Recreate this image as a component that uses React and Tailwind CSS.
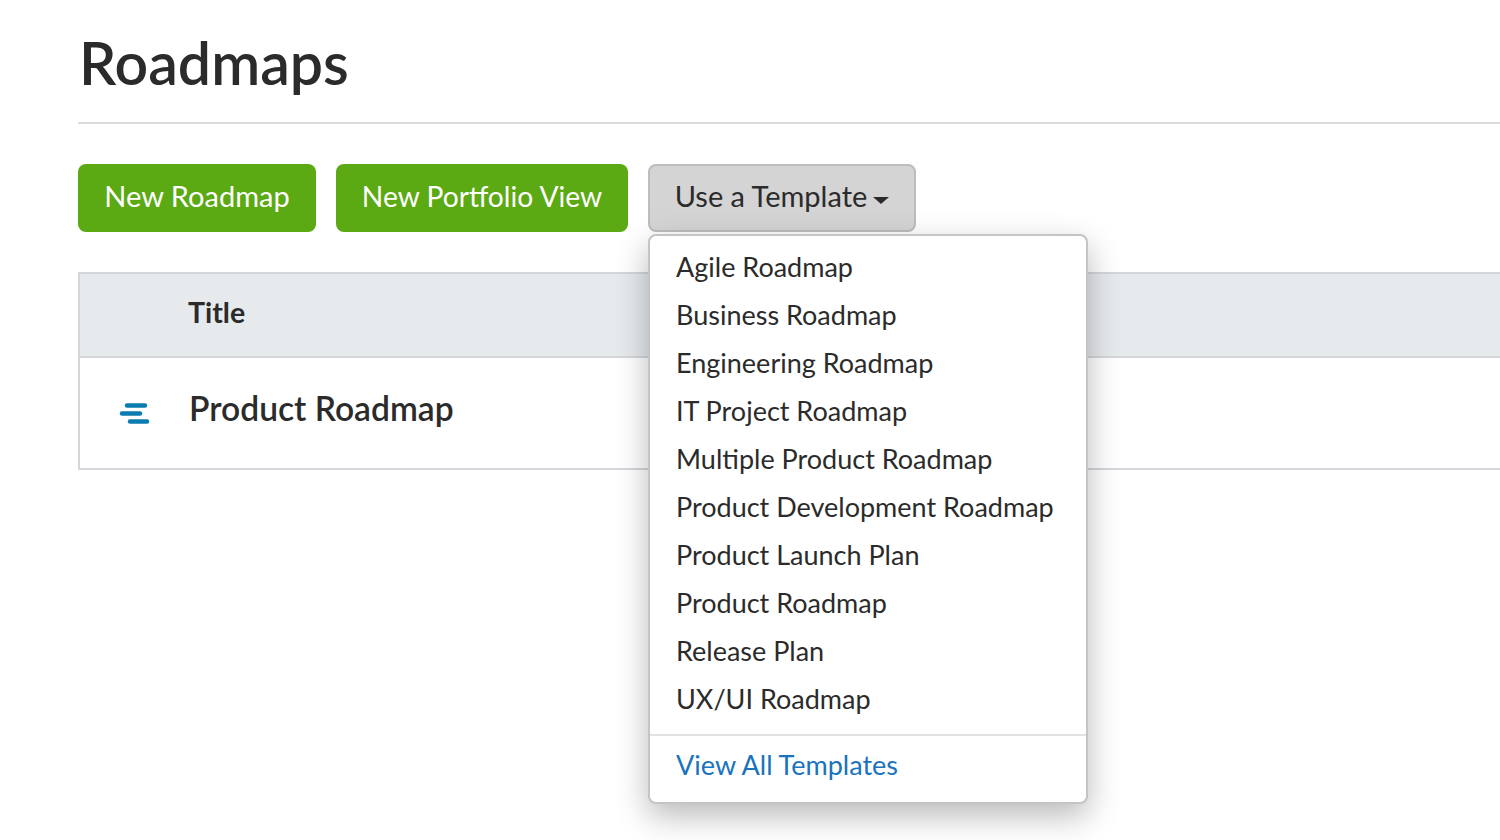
const templates = [
  'Agile Roadmap',
  'Business Roadmap',
  'Engineering Roadmap',
  'IT Project Roadmap',
  'Multiple Product Roadmap',
  'Product Development Roadmap',
  'Product Launch Plan',
  'Product Roadmap',
  'Release Plan',
  'UX/UI Roadmap',
];

const RoadmapIcon = () => (
  <svg width="34" height="24" viewBox="0 0 34 24" fill="none" stroke="#0a7cb0" strokeWidth="4.5" strokeLinecap="round">
    <path d="M11 4.5H29" />
    <path d="M6 12.5H24" />
    <path d="M14 20.5H31" />
  </svg>
);

const App = () => {
  return (
    <div className="h-[840px] w-[1500px] overflow-hidden bg-white pl-[78px] font-['Lato',sans-serif] text-[#2b2b2b]">
      <div className="flex h-[124px] items-start border-b-2 border-[#dcdcdc] pt-[30px]">
        <h1 className="pl-[1px] text-[59px] font-semibold leading-[66px]">Roadmaps</h1>
      </div>

      <div className="relative mt-[40px] flex gap-[20px]">
        <button className="flex h-[68px] w-[238px] items-center justify-center rounded-[8px] bg-[#5ba913] pb-[4px] text-[29px] text-white">
          New Roadmap
        </button>
        <button className="flex h-[68px] w-[292px] items-center justify-center rounded-[8px] bg-[#5ba913] pb-[4px] text-[28.2px] text-white">
          New Portfolio View
        </button>
        <button className="flex h-[68px] w-[268px] items-center justify-center gap-[6px] rounded-[8px] border-2 border-[#bdbdbd] bg-[#d4d4d4] pb-[4px] text-[29px]">
          Use a Template
          <span className="mt-[8px] h-0 w-0 border-x-[8px] border-t-[7px] border-x-transparent border-t-[#2b2b2b]" />
        </button>

        <div className="absolute top-[70px] left-[570px] z-10 w-[440px] rounded-[8px] border-2 border-[#c4c4c4] bg-white shadow-[0_12px_32px_rgba(0,0,0,0.28)]">
          <ul className="pt-[7px] pb-[11px]">
            {templates.map((name) => (
              <li key={name} className="h-[48px] pl-[26px] text-[27px] leading-[48px]">
                {name}
              </li>
            ))}
          </ul>
          <div className="h-[68px] border-t-2 border-[#e2e2e2] pl-[26px] text-[27px] leading-[58px] text-[#1a73bd]">
            View All Templates
          </div>
        </div>
      </div>

      <div className="mt-[40px] border-2 border-r-0 border-[#d3d7db]">
        <div className="flex h-[84px] items-center border-b-2 border-[#d3d7db] bg-[#e7eaed] pb-[5px] pl-[108px] text-[28.5px] font-bold">
          Title
        </div>
        <div className="flex h-[110px] items-center">
          <div className="ml-[36px] flex w-[73px] items-center">
            <RoadmapIcon />
          </div>
          <span className="mb-[10px] text-[33.6px] font-semibold">Product Roadmap</span>
        </div>
      </div>
    </div>
  );
};

export default App;
